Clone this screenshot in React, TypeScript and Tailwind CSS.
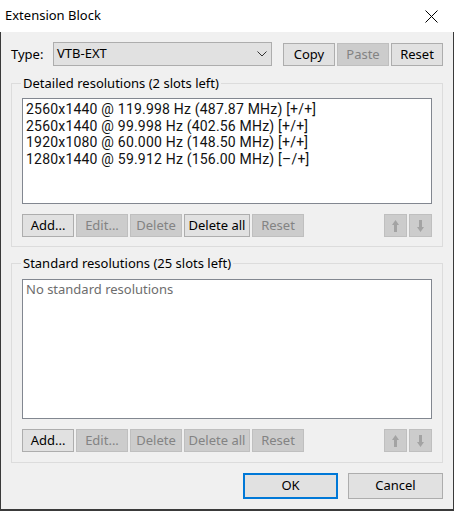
import React from "react";

const font = { fontFamily: '"Noto Sans", "Open Sans", Arial, sans-serif' };
const listFont = { fontFamily: 'Roboto, "Noto Sans", Arial, sans-serif' };

function Btn({ children, disabled, w = "w-[52px]" }: { children: React.ReactNode; disabled?: boolean; w?: string }) {
  return (
    <div
      className={`${w} h-[23px] flex items-center justify-center border text-[13px] leading-none ${
        disabled ? "bg-[#cccccc] border-[#bfbfbf] text-[#838383]" : "bg-[#e1e1e1] border-[#adadad] text-black"
      }`}
    >
      {children}
    </div>
  );
}

function ArrowBtn({ down }: { down?: boolean }) {
  return (
    <div className="w-[23px] h-[23px] flex items-center justify-center border bg-[#cccccc] border-[#bfbfbf]">
      <svg width="7" height="12" viewBox="0 0 7 12" className={down ? "rotate-180" : ""}>
        <polygon points="3.5,0 7,5 5,5 5,12 2,12 2,5 0,5" fill="#a3a3a3" />
      </svg>
    </div>
  );
}

function ButtonRow({ deleteAllEnabled }: { deleteAllEnabled?: boolean }) {
  return (
    <div className="flex items-center mt-[10px]">
      <div className="flex gap-[2px]">
        <Btn>Add...</Btn>
        <Btn disabled>Edit...</Btn>
        <Btn disabled>Delete</Btn>
        <Btn disabled={!deleteAllEnabled} w="w-[66px]">Delete all</Btn>
        <Btn disabled>Reset</Btn>
      </div>
      <div className="ml-auto flex gap-[2px]">
        <ArrowBtn />
        <ArrowBtn down />
      </div>
    </div>
  );
}

function Group({ title, children, pt, pb }: { title: string; children: React.ReactNode; pt: string; pb: string }) {
  return (
    <div className={`relative border border-[#dcdcdc] px-[10px] ${pt} ${pb}`}>
      <span className="absolute -top-[10px] left-[9px] px-[2px] bg-[#f0f0f0] text-[13px] leading-[18px] text-black whitespace-nowrap">
        {title}
      </span>
      {children}
    </div>
  );
}

export default function App() {
  const rows = [
    "2560x1440 @ 119.998 Hz (487.87 MHz) [+/+]",
    "2560x1440 @ 99.998 Hz (402.56 MHz) [+/+]",
    "1920x1080 @ 60.000 Hz (148.50 MHz) [+/+]",
    "1280x1440 @ 59.912 Hz (156.00 MHz) [\u2013/+]",
  ];
  return (
    <div className="w-[454px] h-[511px] flex flex-col bg-[#2b2b2b]" style={font}>
      <div className="h-[32px] bg-white flex items-center justify-between pl-[5px] shrink-0">
        <span className="text-[13px] text-black">Extension Block</span>
        <div className="w-[46px] h-[32px] flex items-center justify-center">
          <svg width="13" height="13" viewBox="0 0 13 13">
            <path d="M0.5 0.5 L12.5 12.5 M12.5 0.5 L0.5 12.5" stroke="#000" strokeWidth="1" />
          </svg>
        </div>
      </div>
      <div className="flex-1 bg-[#f0f0f0] border-l border-r border-b-2 border-[#3a3a3a] pl-[10px] pr-[10px] pt-[10px] flex flex-col">
        <div className="flex items-end h-[24px]">
          <span className="w-[42px] text-[13px] leading-[24px] text-black">Type:</span>
          <div className="w-[219px] h-[24px] border border-[#adadad] bg-[#e1e1e1] flex items-center pl-[3px] pr-[4px]">
            <span className="text-[13px] text-black flex-1">VTB-EXT</span>
            <svg width="10" height="6" viewBox="0 0 10 6">
              <path d="M0.5 0.5 L5 5 L9.5 0.5" stroke="#333" strokeWidth="1" fill="none" />
            </svg>
          </div>
          <div className="ml-auto flex gap-[2px]">
            <Btn>Copy</Btn>
            <Btn disabled>Paste</Btn>
            <Btn>Reset</Btn>
          </div>
        </div>

        <div className="mt-[17px]">
          <Group title="Detailed resolutions (2 slots left)" pt="pt-[14px]" pb="pb-[9px]">
            <div className="h-[106px] border border-[#828790] bg-white px-[3px] pt-[2px]" style={listFont}>
              {rows.map((r) => (
                <div key={r} className="text-[14px] leading-[16.7px] tracking-[0.2px] text-[#111] whitespace-nowrap">
                  {r}
                </div>
              ))}
            </div>
            <ButtonRow deleteAllEnabled />
          </Group>
        </div>

        <div className="mt-[16px]">
          <Group title="Standard resolutions (25 slots left)" pt="pt-[15px]" pb="pb-[10px]">
            <div className="h-[140px] border border-[#828790] bg-white px-[3px] pt-[1px]">
              <div className="text-[13px] leading-[16.7px] text-[#6d6d6d]">No standard resolutions</div>
            </div>
            <ButtonRow />
          </Group>
        </div>

        <div className="mt-[10px] flex justify-end gap-[10px]">
          <div className="w-[95px] h-[26px] border-2 border-[#0078d7] bg-[#e1e1e1] flex items-center justify-center text-[13px] text-black">
            OK
          </div>
          <div className="w-[95px] h-[26px] border border-[#adadad] bg-[#e1e1e1] flex items-center justify-center text-[13px] text-black">
            Cancel
          </div>
        </div>
      </div>
    </div>
  );
}
